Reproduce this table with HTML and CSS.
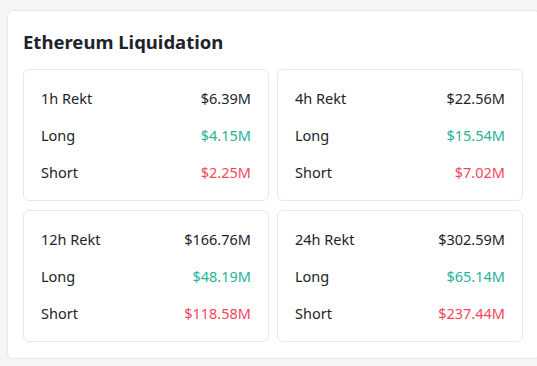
FILE: index.html
```html
<!DOCTYPE html>
<html>
<head>
<meta charset="utf-8">
<link rel="stylesheet" href="styles.css">
</head>
<body>
<section class="panel">
  <h2 class="title">Ethereum Liquidation</h2>
  <div class="grid">
    <div class="card">
      <div class="row"><span>1h Rekt</span><span>$6.39M</span></div>
      <div class="row"><span>Long</span><span class="up">$4.15M</span></div>
      <div class="row"><span>Short</span><span class="down">$2.25M</span></div>
    </div>
    <div class="card">
      <div class="row"><span>4h Rekt</span><span>$22.56M</span></div>
      <div class="row"><span>Long</span><span class="up">$15.54M</span></div>
      <div class="row"><span>Short</span><span class="down">$7.02M</span></div>
    </div>
    <div class="card">
      <div class="row"><span>12h Rekt</span><span>$166.76M</span></div>
      <div class="row"><span>Long</span><span class="up">$48.19M</span></div>
      <div class="row"><span>Short</span><span class="down">$118.58M</span></div>
    </div>
    <div class="card">
      <div class="row"><span>24h Rekt</span><span>$302.59M</span></div>
      <div class="row"><span>Long</span><span class="up">$65.14M</span></div>
      <div class="row"><span>Short</span><span class="down">$237.44M</span></div>
    </div>
  </div>
</section>
</body>
</html>
```

FILE: styles.css
```css
html, body {
  margin: 0;
  padding: 0;
  background: #f5f5f5;
  overflow: hidden;
}
body {
  padding: 10px 0 0 7px;
  font-family: "Noto Sans", "Open Sans", sans-serif;
  color: #1e2329;
}
.panel {
  width: 500px;
  padding: 15px 16px 16px 15px;
  background: #ffffff;
  border: 1px solid #e6e8ea;
  border-radius: 6px;
  box-sizing: content-box;
  margin-right: -40px;
}
.title {
  margin: 0 0 11px 0;
  font-size: 18.5px;
  line-height: 32px;
  font-weight: 700;
  color: #1e2329;
}
.grid {
  display: grid;
  grid-template-columns: 246px 246px;
  column-gap: 8px;
  row-gap: 9px;
}
.card {
  border: 1px solid #e6e8ea;
  border-radius: 6px;
  padding: 16px 17px;
  display: flex;
  flex-direction: column;
  gap: 13px;
}
.row {
  display: flex;
  justify-content: space-between;
  align-items: center;
  height: 24px;
  font-size: 14.5px;
  color: #1e2329;
}
.up { color: #27b396; }
.down { color: #f6465d; }
```
